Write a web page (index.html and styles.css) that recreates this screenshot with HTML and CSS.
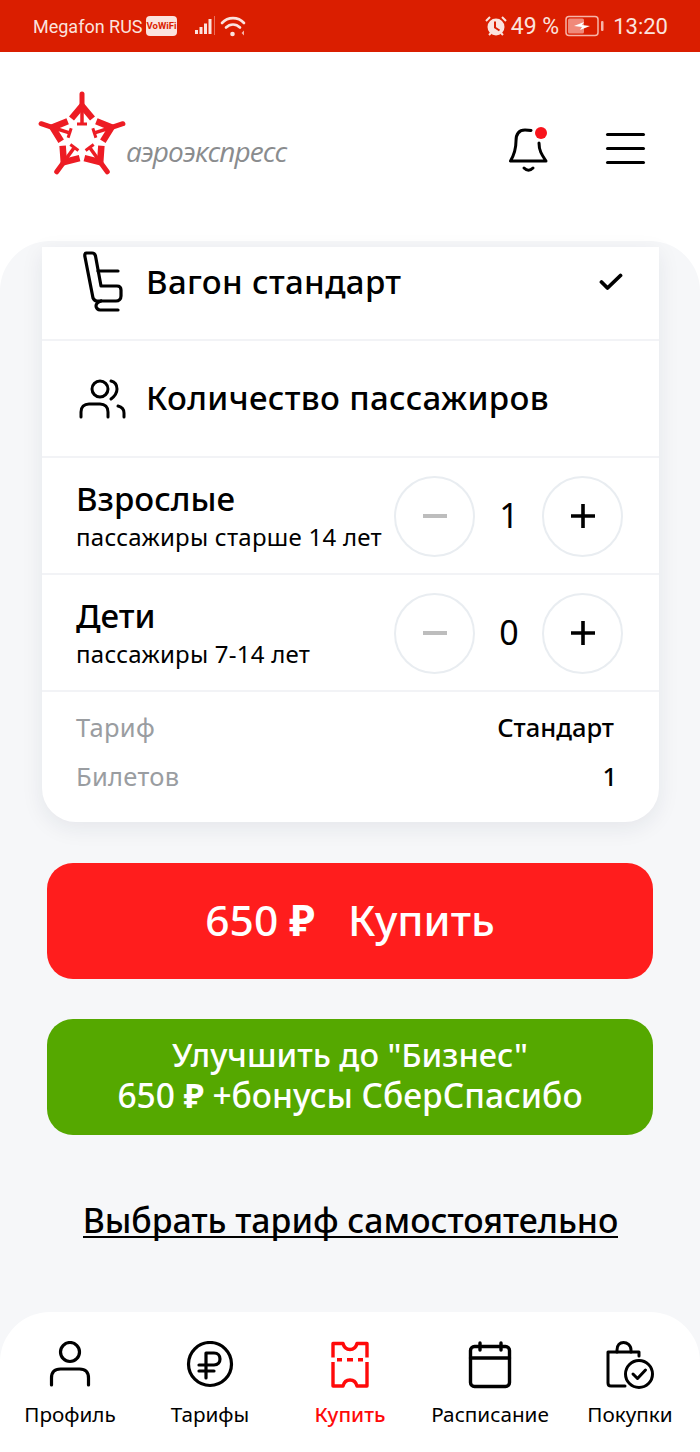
FILE: index.html
```html
<!DOCTYPE html>
<html lang="ru">
<head>
    <meta charset="UTF-8">
    <title>Аэроэкспресс</title>
    <link rel="stylesheet" href="styles.css">
</head>
<body>
<div id="screen">
    <div id="status">
        <div class="status-side">
            <span class="operator">Megafon RUS</span>
            <span class="vowifi">VoWiFi</span>
            <svg class="signal" width="22" height="20" viewBox="0 0 22 20"><path d="M1 14h3v4H1zM5.500 11h3v7h-3zM10 7.500h3V18h-3zM14.500 3h3v15h-3z" fill="#fbe3de"/><path d="M20.500 0v19" stroke="#e8705c" stroke-width="1"/></svg>
            <svg class="wifi" width="26" height="22" viewBox="0 0 26 22" fill="none" stroke="#fbe3de" stroke-width="2.600" stroke-linecap="round"><path d="M2 8C8 1.500 18 1.500 24 8"/><path d="M6 12.500C10 8.500 16 8.500 20 12.500"/><circle cx="12.500" cy="19" r="2.300" fill="#fbe3de" stroke="none"/><path d="M24 15.500v5l-2.500-2.500z" fill="#f6b5a8" stroke="none"/></svg>
        </div>
        <div class="status-side">
            <svg width="22" height="22" viewBox="0 0 22 22"><circle cx="11" cy="12" r="8.500" fill="#fbe3de"/><path d="M10 6.500v6l4.500 3" fill="none" stroke="#da1e00" stroke-width="2"/><path d="M1 6l4-4M21 6l-4-4M4 20l2-2M18 20l-2-2" stroke="#fbe3de" stroke-width="2"/></svg>
            <span class="batt-text">49 %</span>
            <svg width="40" height="22" viewBox="0 0 40 22"><rect x="1" y="1.500" width="32" height="19" rx="3" fill="none" stroke="#f6b5a8" stroke-width="1.500"/><rect x="3" y="3.500" width="16" height="15" rx="1.500" fill="#f0897a"/><path d="M9 11l10-4-2 3 8 1-10 4 2-3z" fill="#fff"/><rect x="36" y="6" width="2.500" height="10" rx="1" fill="#f6b5a8"/></svg>
            <span class="clock">13:20</span>
        </div>
    </div>

    <div id="header">
        <div class="logo">
            <svg width="90" height="85" viewBox="-44 -46 90 85" fill="none" stroke="#ed1c24">
                <defs>
                    <g id="arm">
                        <path d="M0 -43V-29" stroke-width="5" stroke-linecap="round"/>
                        <path d="M-10.500 -18.500L0 -31L10.500 -18.500" stroke-width="6.500"/>
                        <path d="M0 -30V-14" stroke-width="3.500"/>
                        <path d="M-5 -13H5" stroke-width="3"/>
                    </g>
                </defs>
                <use href="#arm"/>
                <use href="#arm" transform="rotate(72)"/>
                <use href="#arm" transform="rotate(144)"/>
                <use href="#arm" transform="rotate(216)"/>
                <use href="#arm" transform="rotate(288)"/>
            </svg>
            <span class="logo-text">аэроэкспресс</span>
        </div>
        <div class="head-icons">
            <div class="bell">
                <svg width="40" height="46" viewBox="0 0 40 46" fill="none" stroke="#000" stroke-width="3" stroke-linecap="round" stroke-linejoin="round"><path d="M22 3.500C20 3 18 3 16 3 9 3 7 8 7 14c0 8-2 14-5.500 20h35.500C33 28 30 24 30 16"/><path d="M15 41c3 3 6 3 9 0"/></svg>
                <span class="dot"></span>
            </div>
            <div class="burger"><span></span><span></span><span></span></div>
        </div>
    </div>

    <div id="main">
        <div class="card">
            <div class="row row-head row-first">
                <svg class="row-icon" width="48" height="64" viewBox="0 0 48 64" fill="none" stroke="#000" stroke-width="3.200" stroke-linecap="round" stroke-linejoin="round"><path d="M8 3h6c2 0 3 1 3.500 3L23 36h16c3 0 4 2 4 4v6c0 3-2 5-5 5H19c-2 0-3-1-4-3L7 7C6.500 5 7 3 8 3z"/><path d="M20 21h20M23 51c-3 1-5 3-5 5s2 4 4 4h18"/></svg>
                <span class="row-title">Вагон стандарт</span>
                <svg class="check" width="24" height="18" viewBox="0 0 24 18" fill="none" stroke="#000" stroke-width="3.800" stroke-linecap="round" stroke-linejoin="round"><path d="M2.500 9l6 6L21.500 2.500"/></svg>
            </div>
            <div class="row row-head">
                <svg class="row-icon" width="48" height="44" viewBox="0 0 48 44" fill="none" stroke="#000" stroke-width="3" stroke-linecap="round" stroke-linejoin="round"><circle cx="22" cy="13" r="8"/><path d="M3 41v-5c0-5 3-8 8-8h11c5 0 8 3 8 8v5M33 5c4 1 6 4 6 8s-2 7-6 10M40 30c4 1 6 4 6 7v4"/></svg>
                <span class="row-title">Количество пассажиров</span>
            </div>
            <div class="row">
                <div class="pax">
                    <div class="pax-name">Взрослые</div>
                    <div class="pax-note">пассажиры старше 14 лет</div>
                </div>
                <div class="counter">
                    <button class="round"><svg width="26" height="26" viewBox="0 0 26 26"><path d="M1 11h24v4H1z" fill="#bdbdbd"/></svg></button>
                    <span class="num">1</span>
                    <button class="round"><svg width="26" height="26" viewBox="0 0 26 26"><path d="M1 11.200h24v3.600H1zM11.200 1h3.600v24h-3.600z" fill="#000"/></svg></button>
                </div>
            </div>
            <div class="row">
                <div class="pax">
                    <div class="pax-name">Дети</div>
                    <div class="pax-note">пассажиры 7-14 лет</div>
                </div>
                <div class="counter">
                    <button class="round"><svg width="26" height="26" viewBox="0 0 26 26"><path d="M1 11h24v4H1z" fill="#bdbdbd"/></svg></button>
                    <span class="num">0</span>
                    <button class="round"><svg width="26" height="26" viewBox="0 0 26 26"><path d="M1 11.200h24v3.600H1zM11.200 1h3.600v24h-3.600z" fill="#000"/></svg></button>
                </div>
            </div>
            <div class="summary">
                <div class="line"><span class="gray">Тариф</span><span class="val">Стандарт</span></div>
                <div class="line"><span class="gray">Билетов</span><span class="val val-num">1</span></div>
            </div>
        </div>

        <a class="btn btn-red">650 <span class="rub">₽</span> &nbsp; Купить</a>
        <a class="btn btn-green">
            <span class="green-top">Улучшить до "Бизнес"</span>
            <span class="green-bottom">650 <span class="rub">₽</span> +бонусы СберСпасибо</span>
        </a>
        <a class="choose">Выбрать тариф самостоятельно</a>
    </div>

    <div id="nav">
        <div class="nav-item">
            <svg width="48" height="48" viewBox="0 0 48 48" fill="none" stroke="#000" stroke-width="3.200" stroke-linecap="round" stroke-linejoin="round"><circle cx="24" cy="11" r="9.500"/><path d="M5.500 44v-7c0-6 3.500-9 9-9h19c5.500 0 9 3 9 9v7"/></svg>
            <span>Профиль</span>
        </div>
        <div class="nav-item">
            <svg width="48" height="48" viewBox="0 0 48 48" fill="none" stroke="#000" stroke-width="3.200" stroke-linecap="round" stroke-linejoin="round"><circle cx="24" cy="23" r="21.500"/><path d="M20 37V12h8c4 0 6 3 6 6s-2 6-6 6H13M13 30h15"/></svg>
            <span>Тарифы</span>
        </div>
        <div class="nav-item active">
            <svg width="48" height="48" viewBox="0 0 48 48" fill="none" stroke="#ff0a0a" stroke-width="3.400" stroke-linejoin="round"><path d="M7 16.500V2.500h10c1 4 4 6 7 6s6-2 7-6h10v14M7 21v24h10c1-4 4-6 7-6s6 2 7 6h10V21"/><path d="M11 18.700h5M21 18.700h6M32 18.700h5"/></svg>
            <span>Купить</span>
        </div>
        <div class="nav-item">
            <svg width="48" height="48" viewBox="0 0 48 48" fill="none" stroke="#000" stroke-width="3.400" stroke-linecap="round" stroke-linejoin="round"><rect x="4.500" y="5.500" width="39" height="40" rx="4"/><path d="M4.500 17h39M14 2v7M35 2v7"/></svg>
            <span>Расписание</span>
        </div>
        <div class="nav-item">
            <svg width="48" height="48" viewBox="0 0 48 48" fill="none" stroke="#000" stroke-width="3" stroke-linecap="round" stroke-linejoin="round"><path d="M19 45H5c-2 0-3-1-3-3V11h31v4"/><path d="M11 11V9c0-5 3-7.500 6.500-7.500S25 4 25 9v2"/><circle cx="33" cy="33" r="13.500"/><path d="M27 33l4.500 4.500 8-8.500"/></svg>
            <span>Покупки</span>
        </div>
    </div>
</div>
</body>
</html>
```

FILE: styles.css
```css
*{
    margin: 0;
    padding: 0;
    box-sizing: border-box;
}
body{
    font-family: "Noto Sans", sans-serif;
    color: #000;
    background: #fff;
}
#screen{
    width: 700px;
    height: 1452px;
    overflow: hidden;
    display: flex;
    flex-direction: column;
}
#status{
    height: 52px;
    background: #da1e00;
    color: #fbe3de;
    font-family: "Roboto", sans-serif;
    font-size: 22px;
    display: flex;
    justify-content: space-between;
    align-items: center;
    padding: 0 32px 0 33px;
    flex: none;
}
.status-side{
    display: flex;
    align-items: center;
    gap: 4px;
}
.operator{
    font-size: 18px;
}
.vowifi{
    background: #fbe3de;
    color: #da1e00;
    font-size: 9.500px;
    font-weight: bold;
    border-radius: 4px;
    padding: 4px 1px;
    line-height: 12px;
    margin: 0 13px 0 -1px;
}
.batt-text{
    font-size: 23px;
    margin-right: 2px;
}
.clock{
    margin-left: 4px;
}
#header{
    height: 189px;
    flex: none;
    display: flex;
    justify-content: space-between;
    padding: 39px 55px 0 38px;
}
.logo{
    display: flex;
    align-items: flex-start;
}
.logo-text{
    font-family: "Open Sans", sans-serif;
    font-style: italic;
    font-size: 28px;
    letter-spacing: -0.9px;
    color: #8a8c8e;
    margin: 41px 0 0 -2px;
}
.head-icons{
    display: flex;
    gap: 57px;
    padding-top: 36px;
}
.bell{
    width: 40px;
    height: 46px;
    position: relative;
}
.dot{
    position: absolute;
    width: 12px;
    height: 12px;
    border-radius: 50%;
    background: #f8141c;
    top: 0;
    right: 2px;
}
.burger{
    width: 39px;
    display: flex;
    flex-direction: column;
    gap: 11px;
    padding-top: 6px;
}
.burger span{
    height: 3px;
    border-radius: 2px;
    background: #000;
}
#main{
    height: 1121px;
    flex: none;
    background: #f6f7f9;
    border-radius: 50px 50px 0 0;
    padding: 6px 41px 0 42px;
    display: flex;
    flex-direction: column;
    align-items: flex-start;
}
.card{
    width: 617px;
    height: 575px;
    background: #fff;
    border-radius: 0 0 34px 34px;
    box-shadow: 0 6px 22px rgba(30, 40, 60, .08);
    flex: none;
}
.row{
    height: 117px;
    border-bottom: 2px solid #f2f3f6;
    display: flex;
    align-items: center;
    justify-content: space-between;
    padding: 0 36px 0 34px;
}
.row-head{
    justify-content: flex-start;
    padding-bottom: 2px;
}
.row-first{
    height: 94px;
    padding-bottom: 22px;
}
.row-icon{
    flex: none;
    margin-right: 20px;
    margin-left: 2px;
}
.row-title{
    font-size: 33px;
    font-weight: 500;
    letter-spacing: .35px;
    line-height: 40px;
    white-space: nowrap;
}
.check{
    margin-left: auto;
}
.pax-name{
    font-size: 33px;
    font-weight: 500;
    line-height: 42px;
}
.pax-note{
    font-size: 24px;
    letter-spacing: .25px;
    line-height: 34px;
    white-space: nowrap;
}
.counter{
    display: flex;
    align-items: center;
    margin-top: 1px;
}
.round{
    width: 81px;
    height: 81px;
    border-radius: 50%;
    border: 2px solid #e9edf1;
    background: #fff;
    display: flex;
    align-items: center;
    justify-content: center;
}
.num{
    width: 67px;
    text-align: center;
    font-size: 34px;
    padding: 0 0 3px 1px;
}
.summary{
    padding: 11px 45px 0 34px;
    font-size: 25.500px;
    letter-spacing: .3px;
}
.line{
    display: flex;
    justify-content: space-between;
    line-height: 49px;
}
.gray{
    color: #9a9da1;
}
.val{
    font-weight: 500;
    letter-spacing: 0;
    font-size: 25.500px;
}
.val-num{
    margin-right: -3px;
}
.btn{
    width: 606px;
    height: 116px;
    margin-left: 5px;
    border-radius: 26px;
    color: #fff;
    display: flex;
    align-items: center;
    justify-content: center;
    text-align: center;
    font-weight: 500;
    flex: none;
    white-space: pre-wrap;
}
.rub{
    font-weight: 700;
}
.btn-red{
    background: #ff1d1d;
    font-size: 42.500px;
    margin-top: 41px;
    padding-bottom: 4px;
}
.btn-green{
    background: #55a800;
    flex-direction: column;
    margin-top: 40px;
    padding-bottom: 4px;
    white-space: nowrap;
}
.green-top{
    font-size: 32.500px;
    line-height: 41px;
}
.green-bottom{
    font-size: 33.500px;
    line-height: 41px;
}
.choose{
    align-self: center;
    margin-top: 62px;
    font-size: 33.800px;
    font-weight: 500;
    line-height: 46px;
    border-bottom: 2px solid #000;
    height: 41px;
    white-space: nowrap;
}
#nav{
    height: 140px;
    flex: none;
    margin-top: -50px;
    background: #fff;
    border-radius: 50px 50px 0 0;
    display: grid;
    grid-template-columns: repeat(5, 140px);
    padding-top: 29px;
    position: relative;
}
.nav-item{
    display: flex;
    flex-direction: column;
    align-items: center;
    font-size: 20.700px;
    line-height: 28px;
    gap: 11px;
    white-space: nowrap;
}
.nav-item.active{
    color: #ff0a0a;
    font-weight: 500;
    font-size: 20.500px;
}
```
